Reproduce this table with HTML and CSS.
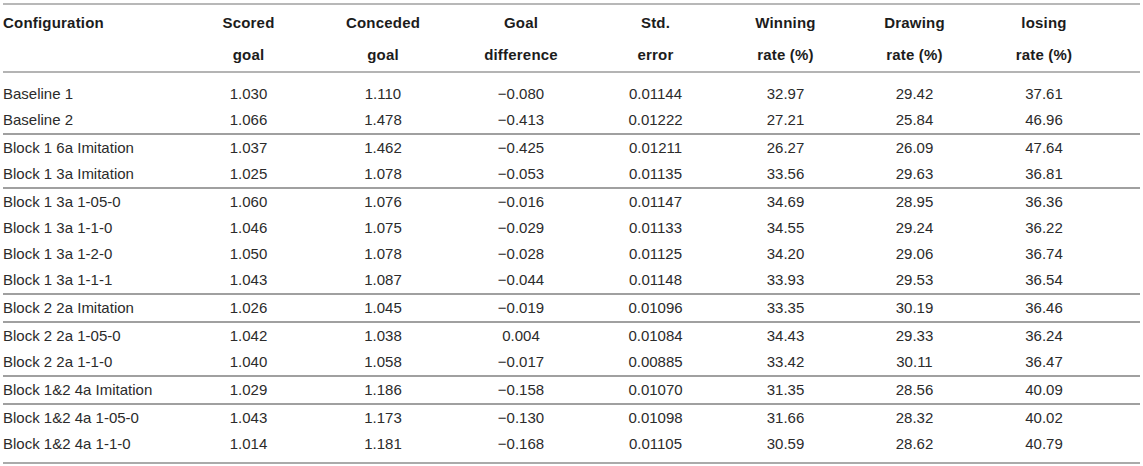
FILE: index.html
```html
<!DOCTYPE html>
<html lang="en">
<head>
  <meta charset="UTF-8">
  <meta name="viewport" content="width=device-width, initial-scale=1.0">
  <title>Configuration results</title>
  <link rel="stylesheet" href="styles.css">
</head>
<body>
  <table class="results">
    <colgroup>
      <col class="c-name">
      <col class="c-scored">
      <col class="c-conceded">
      <col class="c-diff">
      <col class="c-err">
      <col class="c-win">
      <col class="c-draw">
      <col class="c-lose">
    </colgroup>
    <thead>
      <tr>
        <th class="name">Configuration</th>
        <th>Scored<br>goal</th>
        <th>Conceded<br>goal</th>
        <th>Goal<br>difference</th>
        <th>Std.<br>error</th>
        <th>Winning<br>rate (%)</th>
        <th>Drawing<br>rate (%)</th>
        <th class="last">losing<br>rate (%)</th>
      </tr>
    </thead>
    <tbody>
      <tr class="first">
        <td class="name">Baseline 1</td><td>1.030</td><td>1.110</td><td>&minus;0.080</td><td>0.01144</td><td>32.97</td><td>29.42</td><td class="last">37.61</td>
      </tr>
      <tr>
        <td class="name">Baseline 2</td><td>1.066</td><td>1.478</td><td>&minus;0.413</td><td>0.01222</td><td>27.21</td><td>25.84</td><td class="last">46.96</td>
      </tr>
      <tr class="group">
        <td class="name">Block 1 6a Imitation</td><td>1.037</td><td>1.462</td><td>&minus;0.425</td><td>0.01211</td><td>26.27</td><td>26.09</td><td class="last">47.64</td>
      </tr>
      <tr>
        <td class="name">Block 1 3a Imitation</td><td>1.025</td><td>1.078</td><td>&minus;0.053</td><td>0.01135</td><td>33.56</td><td>29.63</td><td class="last">36.81</td>
      </tr>
      <tr class="group">
        <td class="name">Block 1 3a 1-05-0</td><td>1.060</td><td>1.076</td><td>&minus;0.016</td><td>0.01147</td><td>34.69</td><td>28.95</td><td class="last">36.36</td>
      </tr>
      <tr>
        <td class="name">Block 1 3a 1-1-0</td><td>1.046</td><td>1.075</td><td>&minus;0.029</td><td>0.01133</td><td>34.55</td><td>29.24</td><td class="last">36.22</td>
      </tr>
      <tr>
        <td class="name">Block 1 3a 1-2-0</td><td>1.050</td><td>1.078</td><td>&minus;0.028</td><td>0.01125</td><td>34.20</td><td>29.06</td><td class="last">36.74</td>
      </tr>
      <tr>
        <td class="name">Block 1 3a 1-1-1</td><td>1.043</td><td>1.087</td><td>&minus;0.044</td><td>0.01148</td><td>33.93</td><td>29.53</td><td class="last">36.54</td>
      </tr>
      <tr class="group">
        <td class="name">Block 2 2a Imitation</td><td>1.026</td><td>1.045</td><td>&minus;0.019</td><td>0.01096</td><td>33.35</td><td>30.19</td><td class="last">36.46</td>
      </tr>
      <tr class="group">
        <td class="name">Block 2 2a 1-05-0</td><td>1.042</td><td>1.038</td><td>0.004</td><td>0.01084</td><td>34.43</td><td>29.33</td><td class="last">36.24</td>
      </tr>
      <tr>
        <td class="name">Block 2 2a 1-1-0</td><td>1.040</td><td>1.058</td><td>&minus;0.017</td><td>0.00885</td><td>33.42</td><td>30.11</td><td class="last">36.47</td>
      </tr>
      <tr class="group">
        <td class="name">Block 1&amp;2 4a Imitation</td><td>1.029</td><td>1.186</td><td>&minus;0.158</td><td>0.01070</td><td>31.35</td><td>28.56</td><td class="last">40.09</td>
      </tr>
      <tr class="group">
        <td class="name">Block 1&amp;2 4a 1-05-0</td><td>1.043</td><td>1.173</td><td>&minus;0.130</td><td>0.01098</td><td>31.66</td><td>28.32</td><td class="last">40.02</td>
      </tr>
      <tr class="final">
        <td class="name">Block 1&amp;2 4a 1-1-0</td><td>1.014</td><td>1.181</td><td>&minus;0.168</td><td>0.01105</td><td>30.59</td><td>28.62</td><td class="last">40.79</td>
      </tr>
    </tbody>
  </table>
</body>
</html>
```
FILE: styles.css
```css
body {
  margin: 0;
  background: #fff;
  font-family: "Liberation Sans", Arial, sans-serif;
  color: #2b2b2b;
}
.results {
  margin: 3px 3px 0 3px;
  width: 1137px;
  border-collapse: collapse;
  table-layout: fixed;
  font-size: 15px;
  border-top: 2px solid #b8b8b8;
  border-bottom: 2px solid #aaaaaa;
}
.c-name { width: 180px; }
.c-scored { width: 131px; }
.c-conceded { width: 138px; }
.c-diff { width: 138px; }
.c-err { width: 131px; }
.c-win { width: 129px; }
.c-draw { width: 129px; }
.c-lose { width: 161px; }

th, td {
  padding: 0;
  text-align: center;
  white-space: nowrap;
}
th {
  font-weight: bold;
  color: #1c1c1c;
  letter-spacing: 0.2px;
  line-height: 32px;
  padding-top: 2px;
  vertical-align: top;
  border-bottom: 2px solid #b4b4b4;
}
td {
  line-height: 26px;
}
.name {
  text-align: left;
}
.last {
  padding-right: 31px;
}
.first td {
  padding-top: 8px;
}
.group td {
  border-top: 2px solid #a0a0a0;
}
.final td {
  padding-bottom: 5px;
}
```
